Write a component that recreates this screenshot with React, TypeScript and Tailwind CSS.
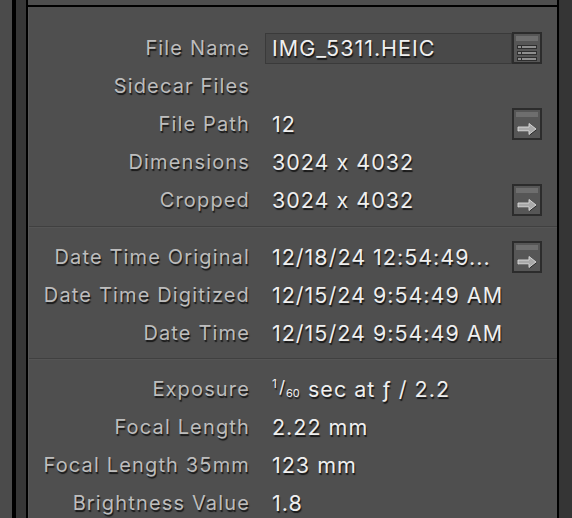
import React from 'react';

type Row = {
  label: string;
  value?: React.ReactNode;
  action?: 'list' | 'arrow';
  boxed?: boolean;
};

const sections: Row[][] = [
  [
    { label: 'File Name', value: 'IMG_5311.HEIC', action: 'list', boxed: true },
    { label: 'Sidecar Files' },
    { label: 'File Path', value: '12', action: 'arrow' },
    { label: 'Dimensions', value: '3024 x 4032' },
    { label: 'Cropped', value: '3024 x 4032', action: 'arrow' },
  ],
  [
    { label: 'Date Time Original', value: '12/18/24 12:54:49...', action: 'arrow' },
    { label: 'Date Time Digitized', value: '12/15/24 9:54:49 AM' },
    { label: 'Date Time', value: '12/15/24 9:54:49 AM' },
  ],
  [
    {
      label: 'Exposure',
      value: (
        <>
          <span className="inline-block w-[33px] h-[24px] relative">
            <span className="absolute left-0 top-[1px] text-[12px] leading-none tracking-normal">1</span>
            <span className="absolute left-[7px] top-[2px] text-[17px] leading-none tracking-normal">/</span>
            <span className="absolute left-[14px] bottom-[2px] text-[11px] leading-none tracking-normal">60</span>
          </span>
          <span className="ml-[3px]">sec at ƒ / 2.2</span>
        </>
      ),
    },
    { label: 'Focal Length', value: '2.22 mm' },
    { label: 'Focal Length 35mm', value: '123 mm' },
    { label: 'Brightness Value', value: '1.8' },
  ],
];

const shadow = '[text-shadow:1px_2px_1px_rgba(0,0,0,0.7)]';

const ActionButton: React.FC<{ kind: 'list' | 'arrow' }> = ({ kind }) => (
  <div className="w-[30px] h-[32px] shrink-0 border-2 border-[#2c2c2c] bg-[#565656] flex flex-col">
    <div className="h-[5px] bg-[#6e6e6e] mx-[2px] mt-[2px]" />
    <div className="flex-1 flex items-center justify-center">
      {kind === 'list' ? (
        <svg width="22" height="18" viewBox="0 0 22 18">
          {[2, 8, 14].map((y) => (
            <g key={y}>
              <rect x="1" y={y} width="20" height="4" fill="#2e2e2e" />
              <rect x="2" y={y + 1} width="3" height="2" fill="#8e8e8e" />
              <rect x="6" y={y + 1} width="14" height="2" fill="#8e8e8e" />
            </g>
          ))}
        </svg>
      ) : (
        <svg width="22" height="16" viewBox="0 0 22 16" className="mt-[3px]">
          <path d="M2 6h11V2.5L20 8 13 13.5V10H2z" fill="#262626" transform="translate(0.6 1)" />
          <path d="M2 6h11V2.5L20 8 13 13.5V10H2z" fill="#a9a9a9" stroke="#dcdcdc" strokeWidth="0.9" />
        </svg>
      )}
    </div>
  </div>
);

const Section: React.FC<{ rows: Row[]; first?: boolean }> = ({ rows, first }) => (
  <div className={first ? 'pt-[22px] pb-[7px]' : 'pt-[10px] pb-[6px]'}>
    {rows.map((r) => (
      <div key={r.label} className="flex items-center h-[38px]">
        <div
          className={`w-[221px] shrink-0 text-right text-[#bdbdbd] text-[20px] tracking-[1.15px] ${shadow}`}
          style={{ fontFamily: 'Inter, "Noto Sans", sans-serif' }}
        >
          {r.label}
        </div>
        <div className="flex-1 flex items-center ml-[15px] mr-[15px]">
          <div
            className={`flex-1 h-[31px] flex items-center pl-[6px] text-[#efefef] text-[21.5px] tracking-[1px] whitespace-nowrap ${shadow} ${
              r.boxed ? 'border border-[#3a3a3a] bg-[#494949]' : 'border border-transparent'
            }`}
            style={{ fontFamily: 'Inter, "Liberation Sans", sans-serif' }}
          >
            {r.value}
          </div>
          {r.action && <ActionButton kind={r.action} />}
        </div>
      </div>
    ))}
  </div>
);

const App: React.FC = () => {
  return (
    <div className="w-[572px] h-[518px] overflow-hidden flex bg-[#4a4a4a]">
      <div className="w-[12px] bg-[#4b4b4b]" />
      <div className="w-[4px] bg-black" />
      <div className="w-[10px] bg-[#373737]" />
      <div className="w-[2px] bg-black" />
      <div className="w-[529px] flex flex-col">
        <div className="h-[5px] bg-[#4e4e4e] shrink-0" />
        <div className="h-[2px] bg-black shrink-0" />
        <div className="flex-1 bg-[#4f4f4f] border-l border-[#575757]">
          {sections.map((rows, i) => (
            <React.Fragment key={i}>
              {i > 0 && <div className="h-[2px] bg-[#404040] border-b border-[#555]" />}
              <Section rows={rows} first={i === 0} />
            </React.Fragment>
          ))}
        </div>
      </div>
      <div className="w-[2px] bg-black" />
      <div className="flex-1 bg-[#353535]" />
    </div>
  );
};

export default App;
